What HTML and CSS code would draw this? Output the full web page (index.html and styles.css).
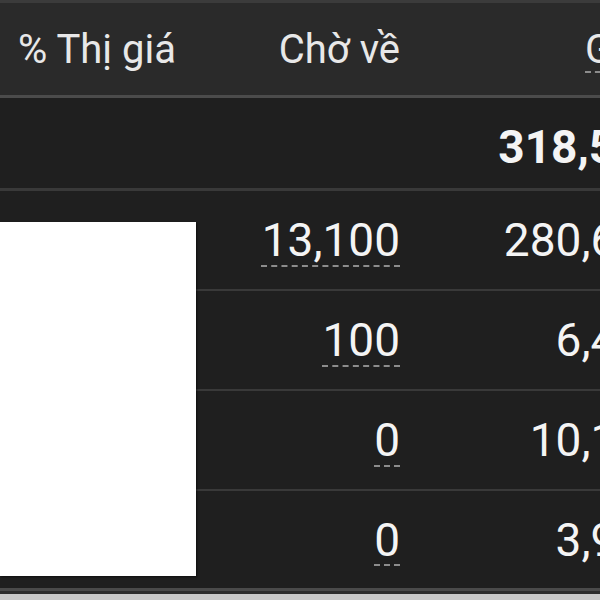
FILE: index.html
```html
<!DOCTYPE html>
<html lang="vi">
<head>
<meta charset="utf-8">
<link rel="stylesheet" href="styles.css">
</head>
<body>
<div class="page">
  <div class="grid">
    <div class="row head">
      <div class="cell c1">% Thị giá</div>
      <div class="cell c2">Chờ về</div>
      <div class="cell c3 hl"><span class="dash">Giá trị</span></div>
    </div>
    <div class="row total">
      <div class="cell c1"></div>
      <div class="cell c2"></div>
      <div class="cell c3 bold">318,590</div>
    </div>
    <div class="row">
      <div class="cell c1"></div>
      <div class="cell c2"><span class="dash">13,100</span></div>
      <div class="cell c3">280,610</div>
    </div>
    <div class="row">
      <div class="cell c1"></div>
      <div class="cell c2"><span class="dash">100</span></div>
      <div class="cell c3">6,430</div>
    </div>
    <div class="row">
      <div class="cell c1"></div>
      <div class="cell c2"><span class="dash">0</span></div>
      <div class="cell c3">10,150</div>
    </div>
    <div class="row last">
      <div class="cell c1"></div>
      <div class="cell c2"><span class="dash">0</span></div>
      <div class="cell c3">3,980</div>
    </div>
  </div>
  <div class="strip"></div>
  <div class="popup"></div>
</div>
</body>
</html>
```
FILE: styles.css
```css
html, body {
  margin: 0;
  padding: 0;
  background: #c9c9c9;
  overflow: hidden;
}
.page {
  position: relative;
  width: 600px;
  height: 600px;
  overflow: hidden;
  font-family: Roboto, "Liberation Sans", sans-serif;
  background: #c9c9c9;
}
.grid {
  width: 692px;
  background: #1f1f1f;
  color: #f4f4f4;
}
.row {
  display: grid;
  grid-template-columns: 196px 228px 268px;
  height: 98px;
  border-bottom: 2px solid #393939;
  box-sizing: content-box;
  align-items: center;
  font-size: 46px;
}
.row.head {
  height: 92px;
  background: #2a2a2a;
  border-top: 3px solid #3b3b3b;
  border-bottom: 3px solid #4b4b4b;
  font-size: 40px;
  color: #e8e8e8;
}
.row.total {
  height: 90px;
  border-bottom: 3px solid #393939;
  padding-top: 0;
}
.row.total .cell {
  padding-top: 8px;
}
.row.last {
  height: 97px;
  border-bottom: 3px solid #4a4a4a;
}
.cell {
  white-space: nowrap;
}
.c1 {
  padding-left: 18px;
  text-align: left;
}
.c2 {
  text-align: right;
  padding-right: 24px;
}
.c3 {
  text-align: right;
  padding-right: 24px;
}
.c3.hl {
  text-align: left;
  padding-left: 161px;
  padding-right: 0;
}
.bold {
  font-weight: 700;
}
.dash {
  text-decoration: underline dashed #8c8c8c;
  text-decoration-thickness: 2px;
  text-underline-offset: 9px;
}
.strip {
  height: 3px;
  background: #2d2d2d;
}
.popup {
  position: absolute;
  left: 0;
  top: 222px;
  width: 196px;
  height: 354px;
  background: #ffffff;
  box-shadow: 1px 1px 2px rgba(0, 0, 0, 0.6);
}
```
